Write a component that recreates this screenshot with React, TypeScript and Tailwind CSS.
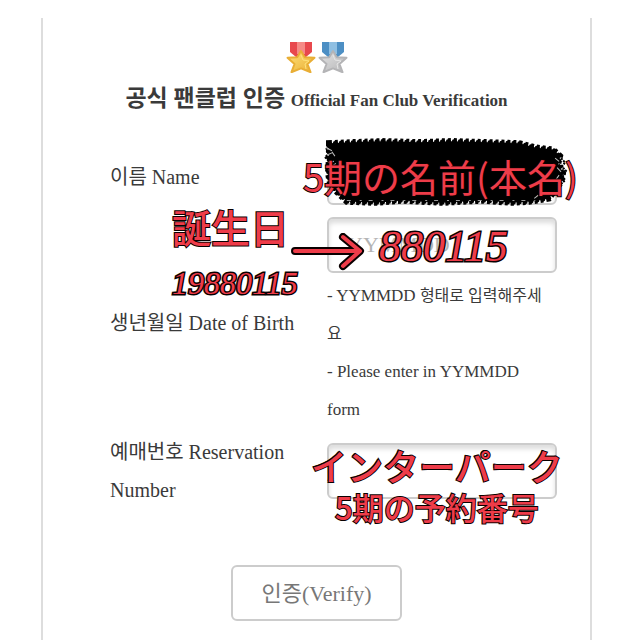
import React from 'react';

const serif = "font-['Liberation_Serif','Noto_Sans_CJK_KR',serif]";
const inkBase = 'absolute whitespace-nowrap leading-none text-[#ee3c49] pointer-events-none [paint-order:stroke_fill]';

// Handwritten style note laid over the form
const Note: React.FC<{ children: React.ReactNode; className?: string }> = ({ children, className = '' }) => (
  <span className={`${inkBase} font-['Noto_Sans_CJK_JP',sans-serif] ${className}`}>{children}</span>
);

const Digits: React.FC<{ children: React.ReactNode; className?: string }> = ({ children, className = '' }) => (
  <span
    className={`${inkBase} font-['Liberation_Serif',serif] italic [-webkit-text-stroke:3px_#0a0000] ${className}`}
  >
    {children}
  </span>
);

// Input
const Input: React.FC<React.InputHTMLAttributes<HTMLInputElement>> = (props) => (
  <input
    type="text"
    className="block w-full h-14 px-[18px] rounded-md border-2 border-[#ccc] bg-white text-[22px] text-[#333] placeholder-[#b4b4b4] shadow-[inset_0_4px_5px_#ddd] focus:outline-none"
    {...props}
  />
);

// Medal
const Medal: React.FC<{ id: string; ribbon: string; stripe: string; light: string; dark: string }> = ({
  id,
  ribbon,
  stripe,
  light,
  dark,
}) => (
  <svg width="30" height="31" viewBox="0 0 30 31" aria-hidden="true">
    <defs>
      <linearGradient id={id} x1="0" y1="0" x2="1" y2="1">
        <stop offset="0" stopColor={light} />
        <stop offset="1" stopColor={dark} />
      </linearGradient>
    </defs>
    <path d="M4 0h22v10l-6 5H10l-6-5z" fill={ribbon} />
    <path d="M11 0h8v12h-8z" fill={stripe} />
    <path
      d="M15 9l3.800 6.200 9.700.6-7 6.200 3 8.200L15 26.400l-9.500 3.800 3-8.200-7-6.200 9.700-.6z"
      fill={`url(#${id})`}
      stroke={dark}
      strokeWidth="2"
      strokeLinejoin="round"
    />
    <path d="M15 13l2 5 6 1-4 3 1 5" fill="none" stroke={light} strokeWidth="1" />
  </svg>
);

// Black marker scribble with a ragged edge
const blob =
  'M6 6L30 5 60 4 96 5 130 4 166 5 198 6 214 10 232 12 239 18 237 26 242 34 240 43 234 50 228 58 208 61 190 62 160 60 120 62 80 60 54 62 24 61 14 52 7 44 5 34 6 20z';

const Scribble = () => (
  <svg
    className="absolute -left-1 -top-3 pointer-events-none overflow-visible"
    width="246"
    height="72"
    viewBox="0 0 248 68"
    preserveAspectRatio="none"
    aria-hidden="true"
  >
    <path d={blob} fill="#000" />
    <path d={blob} fill="none" stroke="#000" strokeWidth="4" strokeLinecap="round" strokeDasharray="1 5" />
    <path d={blob} fill="none" stroke="#000" strokeWidth="6" strokeDasharray="3 3" />
    <path
      d="M6 8l-3 4 3 4-4 3 4 4-3 5M240 20l4 4-3 4 4 4-3 5 2 4-5 4"
      fill="none"
      stroke="#000"
      strokeWidth="2"
      strokeDasharray="2 1"
    />
    <path d="M3 10l6 3M4 17l5-2M5 24l6-1M5 31l6 2M9 14l3 4M8 28l5-3" stroke="#bbb" strokeWidth="1" />
    <path d="M234 20l4 3M236 29l4 4M235 40l3-4M221 55l5-3M213 58l4-3" stroke="#bbb" strokeWidth="1" />
    <path d="M24 60H214" stroke="#999" strokeWidth="1" strokeDasharray="4 9 2 7" />
  </svg>
);

const Arrow = () => (
  <svg
    className="absolute -left-9 top-4 pointer-events-none"
    width="74"
    height="38"
    viewBox="0 0 74 38"
    fill="none"
    strokeLinecap="round"
    strokeLinejoin="round"
    aria-hidden="true"
  >
    <path d="M4 18H66M52 4L69 18 52 33" stroke="#0a0000" strokeWidth="8" />
    <path d="M4 18H66M52 4L69 18 52 33" stroke="#ee3c49" strokeWidth="4" />
  </svg>
);

export default function App() {
  return (
    <div className={`min-h-screen bg-white pt-[18px] text-[#3a3a3a] ${serif}`}>
      <main className="ml-[41px] mr-12 min-h-[calc(100vh-18px)] border-x-2 border-[#ddd] pt-6">
        <header className="flex flex-col items-center">
          <div className="flex gap-0.5">
            <Medal id="gold" ribbon="#e8484d" stripe="#f58a86" light="#ffe27a" dark="#e9ae35" />
            <Medal id="silver" ribbon="#4d8fc4" stripe="#8fbfe2" light="#e6e6e6" dark="#b4b4b6" />
          </div>
          <h1 className="mt-2.5 text-[23px] leading-8 font-bold whitespace-nowrap">
            공식 팬클럽 인증 <small className="text-[17px]">Official Fan Club Verification</small>
          </h1>
        </header>

        <form id="verify" className="mt-8 pl-[67px] pr-[33px] text-xl leading-[38px]" onSubmit={(e) => e.preventDefault()}>
          <div className="flex items-center">
            <label htmlFor="name" className="w-[217px] pr-4 shrink-0">
              이름 Name
            </label>
            <div className="relative flex-1">
              <Input id="name" />
              <Scribble />
              <Note className="-left-6 top-2 text-[38px] font-normal [-webkit-text-stroke:2px_#0a0000]">
                5期の名前(本名)
              </Note>
            </div>
          </div>

          <div className="relative mt-3 flex items-center">
            <label htmlFor="birth" className="w-[217px] pr-4 shrink-0">
              생년월일 Date of Birth
            </label>
            <div className="flex-1">
              <div className="relative">
                <Input id="birth" placeholder="YYMMDD" />
                <Arrow />
                <Digits className="left-[52px] top-2 text-[44px]">880115</Digits>
              </div>
              <p className="mt-1 pr-1.5 text-[17px] leading-[38px]">
                - YYMMDD <span className="text-base leading-none">형태로 입력해주세요</span>
                <br />- Please enter in YYMMDD form
              </p>
            </div>
            <Note className="left-[62px] -top-2.5 text-[39px] font-medium [-webkit-text-stroke:2px_#0a0000]">
              誕生日
            </Note>
            <Digits className="left-[62px] top-[50px] text-[32px]">19880115</Digits>
          </div>

          <div className="mt-1 flex items-center">
            <label htmlFor="reservation" className="w-[217px] pr-4 shrink-0">
              예매번호 Reservation Number
            </label>
            <div className="relative flex-1">
              <Input id="reservation" />
              <Note className="-left-4 top-1 text-[36px] font-medium [-webkit-text-stroke:2px_#0a0000] [text-shadow:-1px_-1px_0_#0a0000]">
                インターパーク
              </Note>
              <Note className="left-2 top-12 text-[31px] font-medium [-webkit-text-stroke:2px_#0a0000]">
                5期の予約番号
              </Note>
            </div>
          </div>
        </form>

        <div className="mt-14 flex justify-center">
          <button
            type="submit"
            form="verify"
            className="h-14 px-7 rounded-md border-2 border-[#ccc] bg-white text-[22px] text-[#777]"
          >
            인증(Verify)
          </button>
        </div>
      </main>
    </div>
  );
}
